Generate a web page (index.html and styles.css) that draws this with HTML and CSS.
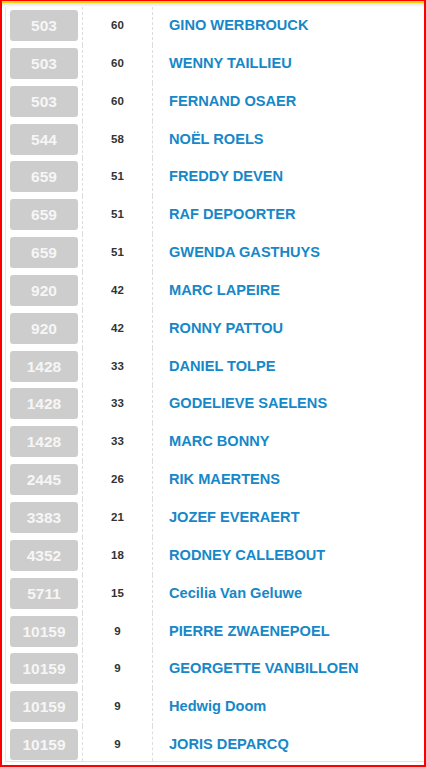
FILE: index.html
```html
<!DOCTYPE html>
<html>
<head>
<meta charset="utf-8">
<link rel="stylesheet" href="styles.css">
</head>
<body>
<div class="frame">
  <div class="topbar"></div>
  <div class="shade"></div>
  <div class="list">
    <div class="row"><div class="c1"><span class="rank">503</span></div><div class="c2">60</div><div class="c3">GINO WERBROUCK</div></div>
    <div class="row"><div class="c1"><span class="rank">503</span></div><div class="c2">60</div><div class="c3">WENNY TAILLIEU</div></div>
    <div class="row"><div class="c1"><span class="rank">503</span></div><div class="c2">60</div><div class="c3">FERNAND OSAER</div></div>
    <div class="row"><div class="c1"><span class="rank">544</span></div><div class="c2">58</div><div class="c3">NOËL ROELS</div></div>
    <div class="row"><div class="c1"><span class="rank">659</span></div><div class="c2">51</div><div class="c3">FREDDY DEVEN</div></div>
    <div class="row"><div class="c1"><span class="rank">659</span></div><div class="c2">51</div><div class="c3">RAF DEPOORTER</div></div>
    <div class="row"><div class="c1"><span class="rank">659</span></div><div class="c2">51</div><div class="c3">GWENDA GASTHUYS</div></div>
    <div class="row"><div class="c1"><span class="rank">920</span></div><div class="c2">42</div><div class="c3">MARC LAPEIRE</div></div>
    <div class="row"><div class="c1"><span class="rank">920</span></div><div class="c2">42</div><div class="c3">RONNY PATTOU</div></div>
    <div class="row"><div class="c1"><span class="rank">1428</span></div><div class="c2">33</div><div class="c3">DANIEL TOLPE</div></div>
    <div class="row"><div class="c1"><span class="rank">1428</span></div><div class="c2">33</div><div class="c3">GODELIEVE SAELENS</div></div>
    <div class="row"><div class="c1"><span class="rank">1428</span></div><div class="c2">33</div><div class="c3">MARC BONNY</div></div>
    <div class="row"><div class="c1"><span class="rank">2445</span></div><div class="c2">26</div><div class="c3">RIK MAERTENS</div></div>
    <div class="row"><div class="c1"><span class="rank">3383</span></div><div class="c2">21</div><div class="c3">JOZEF EVERAERT</div></div>
    <div class="row"><div class="c1"><span class="rank">4352</span></div><div class="c2">18</div><div class="c3">RODNEY CALLEBOUT</div></div>
    <div class="row"><div class="c1"><span class="rank">5711</span></div><div class="c2">15</div><div class="c3">Cecilia Van Geluwe</div></div>
    <div class="row"><div class="c1"><span class="rank">10159</span></div><div class="c2">9</div><div class="c3">PIERRE ZWAENEPOEL</div></div>
    <div class="row"><div class="c1"><span class="rank">10159</span></div><div class="c2">9</div><div class="c3">GEORGETTE VANBILLOEN</div></div>
    <div class="row"><div class="c1"><span class="rank">10159</span></div><div class="c2">9</div><div class="c3">Hedwig Doom</div></div>
    <div class="row"><div class="c1"><span class="rank">10159</span></div><div class="c2">9</div><div class="c3">JORIS DEPARCQ</div></div>
  </div>
</div>
</body>
</html>
```

FILE: styles.css
```css
html, body {
  margin: 0;
  padding: 0;
  background: #ffffff;
}

.frame {
  width: 426px;
  height: 767px;
  box-sizing: border-box;
  border: 2px solid #ff0000;
  border-top: 1px solid #ff0000;
  overflow: hidden;
  font-family: "Liberation Sans", Arial, sans-serif;
  background: #ffffff;
}

.topbar {
  height: 2px;
  background: #f7d40c;
}

.shade {
  height: 4px;
  background: linear-gradient(#dedede, #ffffff);
}

.list {
  margin-left: 3px;
  border-left: 1px solid #e8e8e8;
  border-bottom: 1px solid #e4e4e4;
}

.row {
  display: grid;
  grid-template-columns: 76px 70px 1fr;
  height: 37.85px;
}

.row:last-child {
  height: 35px;
}

.c1 {
  padding: 3px 0 0 4px;
}

.rank {
  display: block;
  width: 68px;
  height: 31px;
  background: #cdcdcd;
  border-radius: 3px;
  color: #f6f6f6;
  font-weight: bold;
  font-size: 15.5px;
  line-height: 31px;
  text-align: center;
}

.c2 {
  border-left: 1px dashed #dddddd;
  padding-top: 3px;
  line-height: 31px;
  font-size: 11.5px;
  font-weight: bold;
  color: #333333;
  text-align: center;
}

.c3 {
  border-left: 1px dashed #dddddd;
  padding: 3px 0 0 16px;
  line-height: 31px;
  font-size: 14.6px;
  font-weight: bold;
  color: #1688c8;
  white-space: nowrap;
}
```
